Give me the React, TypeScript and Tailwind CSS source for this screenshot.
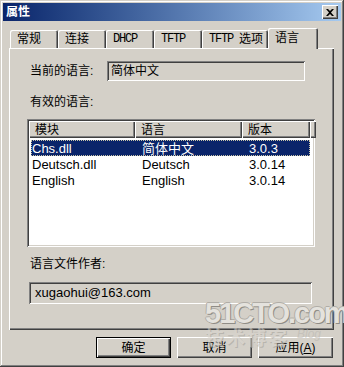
import React from "react";

const face = "bg-[#d4d0c8]";
const raised =
  "shadow-[inset_1px_1px_#ffffff,inset_-1px_-1px_#404040,inset_-2px_-2px_#808080]";
const sunken =
  "shadow-[inset_1px_1px_#808080,inset_-1px_-1px_#ffffff,inset_2px_2px_#404040,inset_-2px_-2px_#d4d0c8]";
const tabEdge = "shadow-[inset_1px_1px_#ffffff,inset_-1px_0_#404040,inset_-2px_0_#808080]";

// latin part is drawn in a mono face, like the old bitmap font
const tabs = [
  { latin: "", cjk: "常规", w: "w-[48px]" },
  { latin: "", cjk: "连接", w: "w-[48px]" },
  { latin: "DHCP", cjk: "", w: "w-[48px]" },
  { latin: "TFTP", cjk: "", w: "w-[48px]" },
  { latin: "TFTP", cjk: "选项", w: "w-[66px]" },
];

const rows = [
  { mod: "Chs.dll", lang: "简体中文", ver: "3.0.3", selected: true },
  { mod: "Deutsch.dll", lang: "Deutsch", ver: "3.0.14", selected: false },
  { mod: "English", lang: "English", ver: "3.0.14", selected: false },
];

function Button({ children, isDefault }: { children: React.ReactNode; isDefault?: boolean }) {
  return (
    <div
      className={`w-[75px] h-[21px] ${face} flex items-center justify-center text-[12px] text-black ${
        isDefault ? "border border-black" : ""
      }`}
    >
      <div className={`w-full h-full flex items-center justify-center ${raised}`}>{children}</div>
    </div>
  );
}

export default function App() {
  return (
    <div className="w-[344px] h-[367px] overflow-hidden font-['Liberation_Sans','Noto_Sans_CJK_SC',sans-serif] text-[12px] text-black">
      <div
        className={`relative w-[344px] h-[367px] p-[3px] ${face} shadow-[inset_-1px_-1px_#404040,inset_1px_1px_#d4d0c8,inset_-2px_-2px_#808080,inset_2px_2px_#ffffff]`}
      >
        {/* Title bar */}
        <div className="h-[18px] flex items-center justify-between pl-[3px] pr-[3px] bg-gradient-to-r from-[#0a246a] to-[#a6caf0]">
          <span className="text-white font-bold text-[12px] leading-none">属性</span>
          <div className={`w-[16px] h-[14px] ${face} ${raised} flex items-center justify-center`}>
            <svg width="8" height="7" viewBox="0 0 8 7">
              <path d="M0 0L2 0L4 2L6 0L8 0L5 3.5L8 7L6 7L4 5L2 7L0 7L3 3.5Z" fill="#000" />
            </svg>
          </div>
        </div>

        <div className="ml-[6px] w-[325px]">
          {/* Tab strip */}
          <div className="relative z-10 mt-[7px] h-[20px] flex items-end pl-[1px]">
            {tabs.map((t, i) => (
              <div
                key={i}
                className={`${t.w} h-[18px] ${face} rounded-t-[2px] ${tabEdge} flex items-center pl-[7px] leading-none`}
              >
                {t.latin && (
                  <span className="font-['Liberation_Mono',monospace] text-[12px] tracking-[-1.2px]">{t.latin}</span>
                )}
                {t.cjk && <span className={t.latin ? "ml-[6px]" : ""}>{t.cjk}</span>}
              </div>
            ))}
            <div
              className={`w-[50px] h-[21px] -mb-[1px] ${face} rounded-t-[2px] ${tabEdge} flex items-start pt-[4px] pl-[7px] leading-none`}
            >
              语言
            </div>
          </div>

          {/* Tab panel */}
          <div
            className={`h-[282px] ${face} shadow-[inset_1px_1px_#ffffff,inset_-1px_-1px_#404040,inset_-2px_-2px_#808080] flex flex-col`}
          >
            <div className="mt-[13px] pl-[21px] h-[20px] flex items-center">
              <span className="w-[77px] leading-[14px]">当前的语言:</span>
              <div className={`w-[198px] h-[20px] ${sunken} flex items-center pl-[4px]`}>简体中文</div>
            </div>

            <div className="mt-[14px] pl-[21px] leading-[14px]">有效的语言:</div>

            <div className={`mt-[10px] ml-[18px] w-[288px] h-[128px] bg-white ${sunken} p-[2px]`}>
              <div className="grid grid-cols-[106px_107px_68px_3px] h-[17px]">
                {["模块", "语言", "版本", ""].map((h, i) => (
                  <div key={i} className={`${face} ${raised} flex items-center pl-[6px] leading-none`}>
                    {h}
                  </div>
                ))}
              </div>
              <div className="mt-[2px] ml-[2px]">
                {rows.map((r) => (
                  <div
                    key={r.mod}
                    className={`grid grid-cols-[104px_107px_68px] w-[279px] h-[16px] items-center leading-none text-[13px] ${
                      r.selected
                        ? "bg-[#0a246a] text-white outline outline-1 outline-dotted outline-[#c8c4a8] -outline-offset-1"
                        : ""
                    }`}
                  >
                    <span className="pl-[1px]">{r.mod}</span>
                    <span className="pl-[7px]">{r.lang}</span>
                    <span className="pl-[7px]">{r.ver}</span>
                  </div>
                ))}
              </div>
            </div>

            <div className="mt-[10px] pl-[21px] leading-[14px]">语言文件作者:</div>

            <div className={`mt-[11px] ml-[20px] w-[283px] h-[22px] ${sunken} flex items-center pl-[6px] text-[13px]`}>
              xugaohui@163.com
            </div>
          </div>

          {/* Buttons */}
          <div className="mt-[7px] flex justify-end gap-[6px] pr-[1px]">
            <Button isDefault>确定</Button>
            <Button>取消</Button>
            <Button>
              应用(<span className="underline">A</span>)
            </Button>
          </div>
        </div>

        {/* Watermark */}
        <div className="absolute left-[205px] top-[297px] whitespace-nowrap pointer-events-none select-none">
          <div className="font-['Liberation_Sans',sans-serif] font-bold text-[29px] leading-[32px] tracking-[-2px] text-[#e4e2dd] [text-shadow:1px_1px_0_#8f8c86,-1px_0_0_#b0ada7,0_-1px_0_#b0ada7]">
            51CTO.com
          </div>
          <div className="-mt-[2px] flex items-end opacity-55">
            <span className="font-['Noto_Sans_CJK_SC',sans-serif] font-bold text-[19px] leading-none tracking-[2px] text-[#d8d5cf] [text-shadow:1px_1px_0_#a29f99]">
              技术博客
            </span>
            <span className="ml-[8px] mb-[6px] italic text-[12px] leading-none text-[#b9b6b0]">Blog</span>
          </div>
        </div>
      </div>
    </div>
  );
}
